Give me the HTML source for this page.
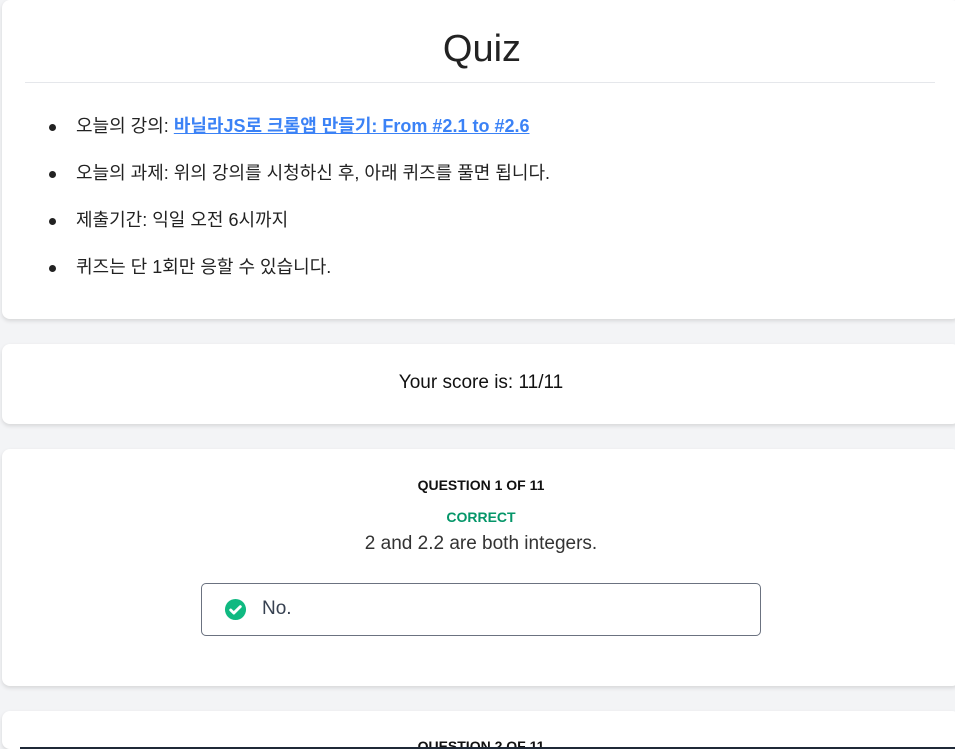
<!DOCTYPE html>
<html><head><meta charset="utf-8"><style>
html,body{margin:0;padding:0;background:#f3f4f6;width:955px;height:749px;overflow:hidden;font-family:"Liberation Sans","Noto Sans CJK KR",sans-serif;color:#1f2937}
.card{position:absolute;left:2px;width:958px;background:#fff;border-radius:8px;box-shadow:0 2px 4px rgba(0,0,0,.12)}
h1{position:absolute;left:0;width:960px;top:27px;margin:0;text-align:center;font-size:38px;font-weight:normal;color:#222;line-height:44px}
.hr{position:absolute;left:23px;top:82px;width:910px;height:1px;background:#e5e7eb}
ul{position:absolute;top:114px;left:0;margin:0;padding-left:74px;font-size:18px;line-height:24px;color:#222;list-style:none}
li{margin-bottom:23px;position:relative}
li::before{content:"";position:absolute;left:-27px;top:10px;width:7px;height:7px;border-radius:50%;background:#222}
a{color:#3b82f6;font-weight:bold;text-decoration:underline}
.c{position:absolute;left:0;width:958px;text-align:center}
.opt{position:absolute;left:199px;top:134px;width:558px;height:51px;border:1px solid #6b7280;border-radius:5px}
</style></head><body>
<div class="card" style="top:0;height:319px">
<h1>Quiz</h1><div class="hr"></div>
<ul>
<li>오늘의 강의: <a>바닐라JS로 크롬앱 만들기: From #2.1 to #2.6</a></li>
<li>오늘의 과제: 위의 강의를 시청하신 후, 아래 퀴즈를 풀면 됩니다.</li>
<li>제출기간: 익일 오전 6시까지</li>
<li>퀴즈는 단 1회만 응할 수 있습니다.</li>
</ul>
</div>
<div class="card" style="top:344px;height:80px">
<div class="c" style="top:28px;font-size:19px;color:#111">Your score is: 11/11</div>
</div>
<div class="card" style="top:449px;height:237px">
<div class="c" style="top:28px;font-size:14px;font-weight:bold;color:#111">QUESTION 1 OF 11</div>
<div class="c" style="top:60px;font-size:14px;font-weight:bold;color:#059669">CORRECT</div>
<div class="c" style="top:84px;font-size:19px;color:#333">2 and 2.2 are both integers.</div>
<div class="opt">
<svg style="position:absolute;left:22px;top:14px" width="23" height="23" viewBox="0 0 24 24"><circle cx="12" cy="12" r="11" fill="#10b981"/><path d="M7 12.5l3.2 3.2L17 9" fill="none" stroke="#fff" stroke-width="3" stroke-linecap="round" stroke-linejoin="round"/></svg>
<span style="position:absolute;left:60px;top:14px;font-size:19px;color:#374151">No.</span>
</div>
</div>
<div class="card" style="top:711px;height:38px;overflow:hidden">
<div class="c" style="top:27px;font-size:14px;font-weight:bold;color:#111">QUESTION 2 OF 11</div>
</div>
<div style="position:absolute;left:20px;top:747px;width:940px;height:2px;background:#1f2937"></div>
</body></html>
